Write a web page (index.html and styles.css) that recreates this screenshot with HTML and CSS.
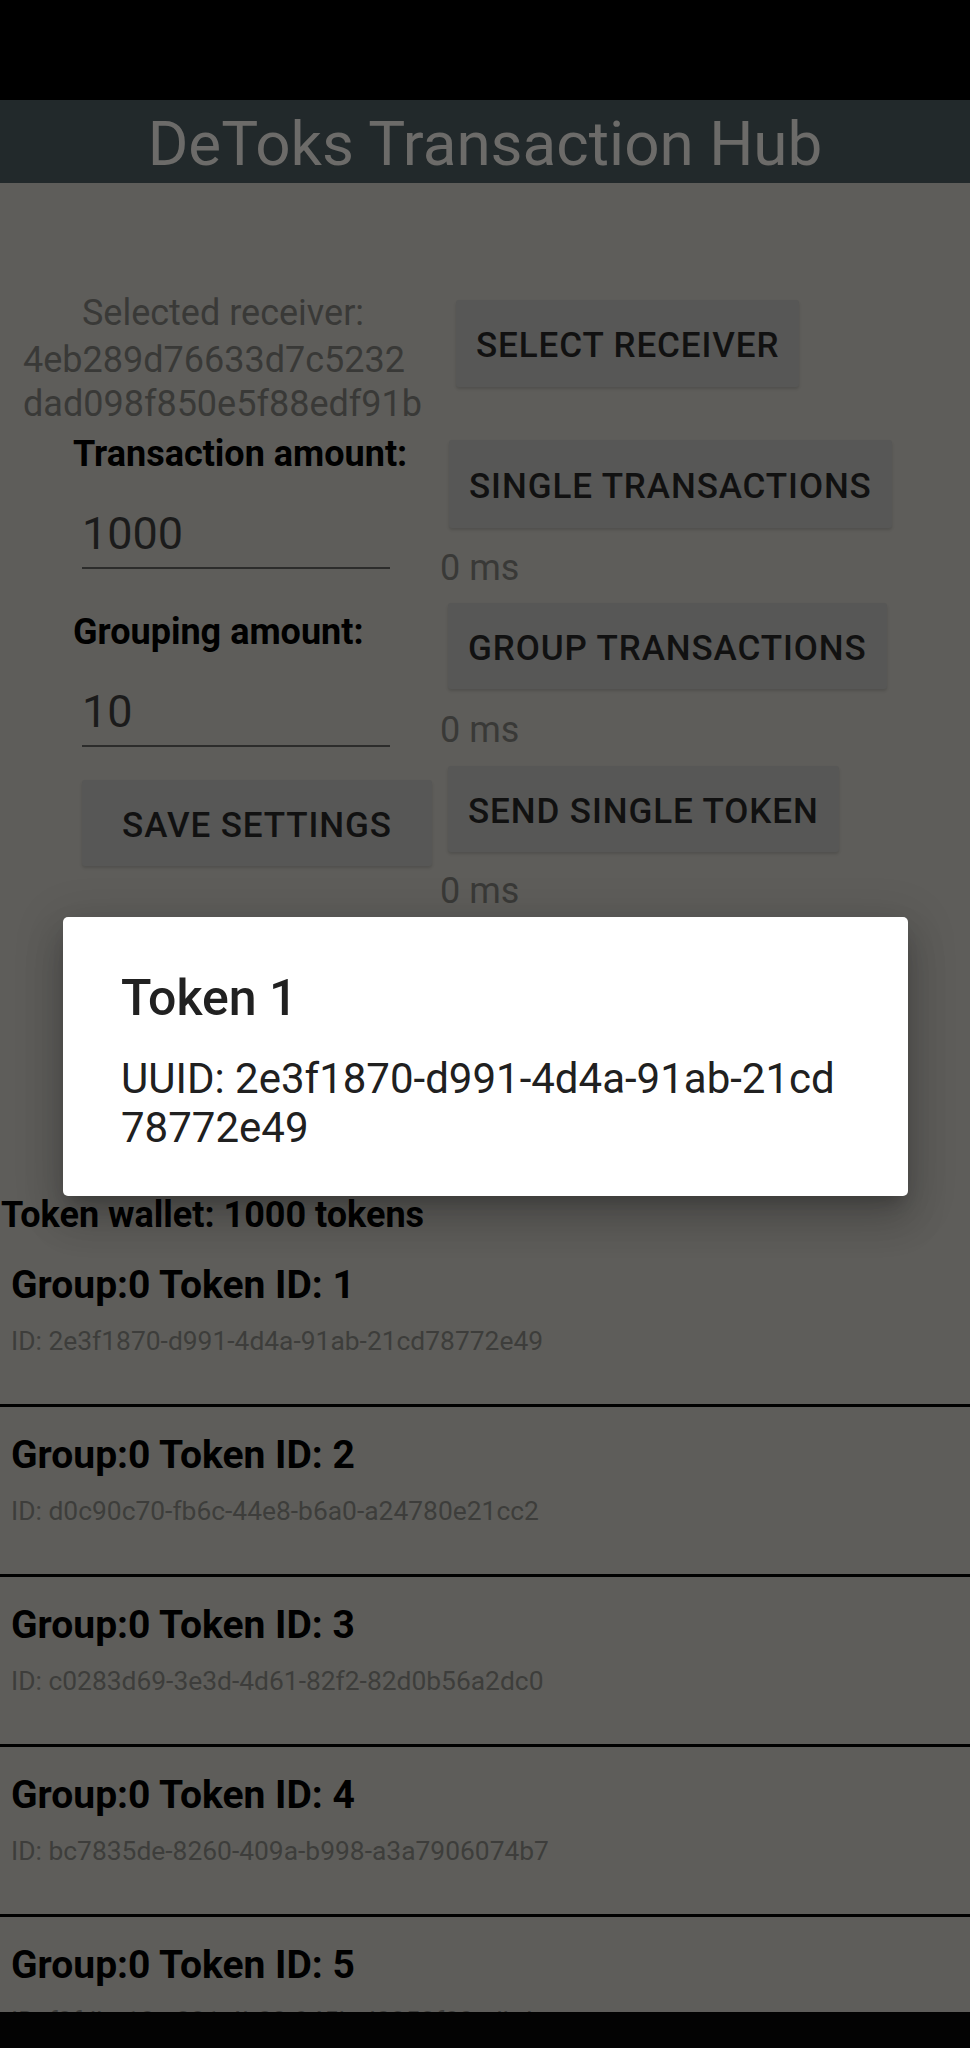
FILE: index.html
```html
<!DOCTYPE html>
<html lang="en">
<head>
<meta charset="utf-8">
<title>DeToks Transaction Hub</title>
<link rel="stylesheet" href="styles.css">
</head>
<body>
<div class="screen">
  <div class="status-bar"></div>
  <header class="app-bar">DeToks Transaction Hub</header>
  <main class="content">
    <section class="controls">
      <div class="col-left">
        <div class="receiver-label">Selected receiver:</div>
        <div class="receiver-id">4eb289d76633d7c5232<br>dad098f850e5f88edf91b</div>
        <div class="field-label">Transaction amount:</div>
        <div class="field-input">1000</div>
        <div class="field-label field-label-2">Grouping amount:</div>
        <div class="field-input">10</div>
        <button class="btn btn-save">SAVE SETTINGS</button>
      </div>
      <div class="col-right">
        <button class="btn btn-select">SELECT RECEIVER</button>
        <button class="btn btn-single">SINGLE TRANSACTIONS</button>
        <div class="timing">0 ms</div>
        <button class="btn btn-group">GROUP TRANSACTIONS</button>
        <div class="timing">0 ms</div>
        <button class="btn btn-send">SEND SINGLE TOKEN</button>
        <div class="timing">0 ms</div>
      </div>
    </section>
    <div class="wallet">Token wallet: 1000 tokens</div>
    <ul class="token-list">
      <li class="token-row">
        <div class="token-title">Group:0 Token ID: 1</div>
        <div class="token-id">ID: 2e3f1870-d991-4d4a-91ab-21cd78772e49</div>
      </li>
      <li class="token-row">
        <div class="token-title">Group:0 Token ID: 2</div>
        <div class="token-id">ID: d0c90c70-fb6c-44e8-b6a0-a24780e21cc2</div>
      </li>
      <li class="token-row">
        <div class="token-title">Group:0 Token ID: 3</div>
        <div class="token-id">ID: c0283d69-3e3d-4d61-82f2-82d0b56a2dc0</div>
      </li>
      <li class="token-row">
        <div class="token-title">Group:0 Token ID: 4</div>
        <div class="token-id">ID: bc7835de-8260-409a-b998-a3a7906074b7</div>
      </li>
      <li class="token-row">
        <div class="token-title">Group:0 Token ID: 5</div>
        <div class="token-id">ID: f2fdbe10-c321-4b02-945b-d0353f02edbd</div>
      </li>
    </ul>
  </main>
  <div class="nav-bar"></div>

  <div class="dialog" role="dialog">
    <div class="dialog-title">Token 1</div>
    <div class="dialog-body">UUID: 2e3f1870-d991-4d4a-91ab-21cd78772e49</div>
  </div>
</div>
</body>
</html>
```

FILE: styles.css
```css
* { box-sizing: border-box; }

html, body {
  margin: 0;
  padding: 0;
  background: #000;
}

body {
  font-family: "Roboto", "Noto Sans", "Liberation Sans", sans-serif;
}

.screen {
  position: relative;
  width: 970px;
  height: 2048px;
  display: flex;
  flex-direction: column;
  overflow: hidden;
  background: #5e5d5a;
}

.status-bar {
  height: 100px;
  flex: none;
  background: #000;
}

.app-bar {
  height: 83px;
  flex: none;
  background: #22292b;
  color: #6c6b69;
  font-size: 62px;
  line-height: 78px;
  padding-top: 5px;
  text-align: center;
  white-space: nowrap;
}

.content {
  flex: 1;
  overflow: hidden;
}

.nav-bar {
  height: 36px;
  flex: none;
  background: #030303;
}

/* ---------- controls ---------- */
.controls {
  display: flex;
  align-items: flex-start;
}

.col-left {
  width: 440px;
  flex: none;
  padding-top: 108px;
  display: flex;
  flex-direction: column;
}

.col-right {
  flex: 1;
  padding-top: 117px;
  display: flex;
  flex-direction: column;
  align-items: flex-start;
}

.receiver-label {
  width: 446px;
  text-align: center;
  color: #393937;
  font-size: 36px;
  line-height: 44px;
}

.receiver-id {
  align-self: flex-start;
  margin: 3px 0 0 23px;
  text-align: left;
  color: #393937;
  font-size: 36px;
  line-height: 44px;
}

.field-label {
  margin-top: 8px;
  padding-left: 73px;
  color: #000;
  font-size: 36px;
  font-weight: 700;
  line-height: 40px;
  white-space: nowrap;
}

.field-label-2 {
  margin-top: 43px;
}

.field-input {
  margin-top: 31px;
  margin-left: 82px;
  width: 308px;
  color: #1b1b1b;
  font-size: 45px;
  line-height: 56px;
  padding-top: 1px;
  padding-bottom: 5px;
  border-bottom: 2px solid #2c2c2b;
}

.btn {
  display: block;
  border: 0;
  margin: 0;
  background: #575756;
  color: #111;
  font-family: inherit;
  font-size: 35px;
  font-weight: 500;
  letter-spacing: 0.9px;
  height: 87px;
  line-height: 82px;
  padding: 5px 20px 0;
  border-radius: 3px;
  box-shadow: 0 2px 3px rgba(0, 0, 0, 0.14);
  white-space: nowrap;
  text-align: center;
}

.btn-save {
  margin-top: 33px;
  margin-left: 82px;
  width: 350px;
  height: 86px;
  line-height: 81px;
}

.btn-select {
  margin-left: 16px;
}

.btn-single {
  margin-top: 53px;
  margin-left: 9px;
  height: 88px;
  line-height: 83px;
}

.btn-group {
  margin-top: 13px;
  margin-left: 8px;
  height: 86px;
  line-height: 81px;
}

.btn-send {
  margin-top: 14px;
  margin-left: 8px;
  height: 86px;
  line-height: 81px;
}

.timing {
  margin-top: 18px;
  color: #393937;
  font-size: 36px;
  line-height: 44px;
}

.btn-group + .timing { margin-top: 19px; }
.btn-send + .timing { margin-top: 17px; }

/* ---------- wallet + list ---------- */
.wallet {
  margin-top: 282px;
  padding-left: 1px;
  color: #000;
  font-size: 36px;
  font-weight: 700;
  line-height: 40px;
  white-space: nowrap;
}

.token-list {
  list-style: none;
  margin: 2px 0 0;
  padding: 0;
}

.token-row {
  padding: 25px 11px 47px;
  border-bottom: 3px solid #000;
}

.token-title {
  color: #000;
  font-size: 39px;
  font-weight: 700;
  line-height: 46px;
  white-space: nowrap;
}

.token-id {
  margin-top: 17px;
  color: #3d3d3b;
  font-size: 26.4px;
  line-height: 32px;
  white-space: nowrap;
}

/* ---------- dialog ---------- */
.dialog {
  position: absolute;
  left: 63px;
  top: 917px;
  width: 845px;
  height: 279px;
  background: #fff;
  border-radius: 5px;
  padding: 51px 65px 0 58px;
  box-shadow:
    0 11px 15px -7px rgba(0, 0, 0, 0.2),
    0 24px 38px 3px rgba(0, 0, 0, 0.14),
    0 9px 46px 8px rgba(0, 0, 0, 0.12);
}

.dialog-title {
  color: #212121;
  font-size: 50px;
  font-weight: 500;
  line-height: 60px;
}

.dialog-body {
  margin-top: 26px;
  color: #202020;
  font-size: 42px;
  line-height: 49px;
  word-break: break-all;
}
```
